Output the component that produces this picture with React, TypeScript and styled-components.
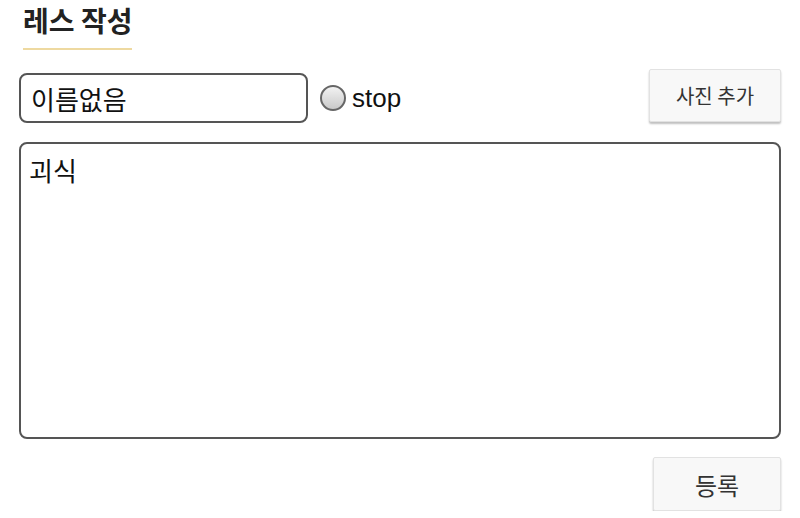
import styled, { createGlobalStyle } from "styled-components";

const GlobalStyle = createGlobalStyle`
  body {
    margin: 0;
    background: #fff;
    font-family: "Liberation Sans", "Noto Sans CJK KR", sans-serif;
    color: #111;
  }
`;

const Page = styled.div`
  display: flex;
  flex-direction: column;
  padding: 2px 19px 0 19px;
`;

const Title = styled.h2`
  align-self: flex-start;
  margin: 0 0 0 4px;
  padding-bottom: 10px;
  border-bottom: 2px solid #eed9a0;
  font-family: "Noto Sans CJK KR", sans-serif;
  font-size: 28px;
  font-weight: 700;
  line-height: 36px;
  color: #222;
`;

const TopRow = styled.div`
  display: flex;
  align-items: flex-start;
  margin-top: 19px;
`;

const NameInput = styled.input`
  box-sizing: border-box;
  width: 289px;
  height: 50px;
  margin-top: 4px;
  padding: 0 10px;
  border: 2px solid #555;
  border-radius: 8px;
  font-family: "Noto Sans CJK KR", sans-serif;
  font-size: 26px;
  color: #111;
  outline: none;
`;

const Check = styled.label`
  display: flex;
  align-items: center;
  gap: 6px;
  height: 50px;
  margin-top: 4px;
  margin-left: 12px;
  font-family: "Liberation Sans", Arial, sans-serif;
  font-size: 26px;
  color: #111;
`;

const Radio = styled.input`
  appearance: none;
  box-sizing: border-box;
  width: 26px;
  height: 26px;
  margin: 0;
  border: 2px solid #666;
  border-radius: 50%;
  background: linear-gradient(#f2f2f2, #c9c9c9);
`;

const Button = styled.button<{ $w: number; $h: number; $size: number }>`
  box-sizing: border-box;
  width: ${(p) => p.$w}px;
  height: ${(p) => p.$h}px;
  margin-left: auto;
  border: 1px solid #e2e2e2;
  border-radius: 2px;
  background: #f8f8f8;
  box-shadow: 0 2px 2px rgba(0, 0, 0, 0.25);
  font-family: "Noto Sans CJK KR", sans-serif;
  font-size: ${(p) => p.$size}px;
  color: #333;
  cursor: pointer;
`;

const Body = styled.textarea`
  box-sizing: border-box;
  width: 100%;
  height: 297px;
  margin-top: 19px;
  padding: 10px 8px;
  border: 2px solid #555;
  border-radius: 8px;
  font-family: "Noto Sans CJK KR", sans-serif;
  font-size: 26px;
  line-height: 1.2;
  color: #111;
  resize: none;
  outline: none;
`;

const Footer = styled.div`
  display: flex;
  margin-top: 18px;
`;

export default function App() {
  return (
    <Page>
      <GlobalStyle />
      <Title>레스 작성</Title>
      <TopRow>
        <NameInput defaultValue="이름없음" />
        <Check>
          <Radio type="radio" />
          stop
        </Check>
        <Button $w={132} $h={53} $size={20}>
          사진 추가
        </Button>
      </TopRow>
      <Body defaultValue="괴식" />
      <Footer>
        <Button $w={128} $h={54} $size={24}>
          등록
        </Button>
      </Footer>
    </Page>
  );
}
